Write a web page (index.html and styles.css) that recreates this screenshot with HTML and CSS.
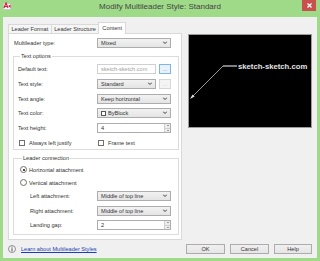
FILE: index.html
```html
<!DOCTYPE html>
<html lang="en">
<head>
    <meta charset="UTF-8">
    <meta name="viewport" content="width=device-width, initial-scale=1.0">
    <title>Modify Multileader Style: Standard</title>
    <link rel="stylesheet" href="styles.css">
</head>
<body>
    <div class="window">
        <div class="titlebar">
            <div class="app-icon">
                <svg width="8" height="8" viewBox="0 0 8 8">
                    <rect x="0.5" y="1.5" width="7" height="6" fill="#fff" stroke="#c9c9c9"/>
                    <path d="M1 6 L3 1 L5 6 M2 4.5 H4" fill="none" stroke="#d0263a" stroke-width="1.2"/>
                    <path d="M5 4 L7.5 2.5 V6 Z" fill="#d0263a"/>
                </svg>
            </div>
            <div class="title">Modify Multileader Style: Standard</div>
            <div class="title-right">
                <button class="close">
                    <svg width="5" height="5" viewBox="0 0 5 5"><path d="M0.5 0.5 L4.5 4.5 M4.5 0.5 L0.5 4.5" stroke="#fff" stroke-width="1.3"/></svg>
                </button>
            </div>
        </div>

        <div class="dialog">
            <div class="tabs">
                <div class="tab">Leader Format</div>
                <div class="tab">Leader Structure</div>
                <div class="tab active">Content</div>
            </div>

            <div class="main">
                <div class="panel">
                    <div class="row top-row">
                        <span class="label">Multileader type:</span>
                        <div class="combo"><span>Mixed</span><i class="chev"></i></div>
                    </div>

                    <fieldset class="group text-options">
                        <legend>Text options</legend>
                        <div class="grid">
                            <span class="label">Default text:</span>
                            <div class="pair">
                                <div class="field disabled">sketch-sketch.com</div>
                                <button class="dots focus">...</button>
                            </div>

                            <span class="label">Text style:</span>
                            <div class="pair">
                                <div class="combo"><span>Standard</span><i class="chev"></i></div>
                                <button class="dots off">...</button>
                            </div>

                            <span class="label">Text angle:</span>
                            <div class="combo"><span>Keep horizontal</span><i class="chev"></i></div>

                            <span class="label">Text color:</span>
                            <div class="combo"><span><b class="swatch"></b>ByBlock</span><i class="chev"></i></div>

                            <span class="label">Text height:</span>
                            <div class="field spin">4
                                <span class="spinner"><i class="up"></i><i class="down"></i></span>
                            </div>
                        </div>
                        <div class="checks">
                            <label class="check"><b class="box"></b>Always left justify</label>
                            <label class="check"><b class="box"></b>Frame text</label>
                        </div>
                    </fieldset>

                    <fieldset class="group leader-conn">
                        <legend>Leader connection</legend>
                        <label class="radio"><b class="dot on"></b>Horizontal attachment</label>
                        <label class="radio"><b class="dot"></b>Vertical attachment</label>
                        <div class="grid sub">
                            <span class="label">Left attachment:</span>
                            <div class="combo"><span>Middle of top line</span><i class="chev"></i></div>

                            <span class="label">Right attachment:</span>
                            <div class="combo"><span>Middle of top line</span><i class="chev"></i></div>

                            <span class="label">Landing gap:</span>
                            <div class="field spin">2
                                <span class="spinner"><i class="up"></i><i class="down"></i></span>
                            </div>
                        </div>
                    </fieldset>
                </div>

                <div class="side">
                    <div class="preview">
                        <svg width="122" height="92" viewBox="0 0 122 92">
                            <line x1="34" y1="31" x2="2" y2="63" stroke="#a8a8a8" stroke-width="0.9"/>
                            <line x1="34" y1="31" x2="48" y2="31" stroke="#b5b5b5" stroke-width="1.4"/>
                            <polygon points="1,64 5.6,61.5 3.5,59.4" fill="#e0e0e0"/>
                            <text x="49" y="34" class="preview-text">sketch-sketch.com</text>
                        </svg>
                    </div>
                </div>
            </div>

            <div class="footer">
                <svg class="info" width="8" height="8" viewBox="0 0 8 8">
                    <circle cx="4" cy="4" r="3.5" fill="#f4f4f4" stroke="#7a7a7a" stroke-width="0.8"/>
                    <rect x="3.5" y="1.6" width="1" height="1" fill="#555"/>
                    <rect x="3.5" y="3.2" width="1" height="3.2" fill="#555"/>
                </svg>
                <a class="learn" href="#">Learn about Multileader Styles</a>
                <div class="buttons">
                    <button class="btn">OK</button>
                    <button class="btn">Cancel</button>
                    <button class="btn">Help</button>
                </div>
            </div>
        </div>
    </div>
</body>
</html>
```

FILE: styles.css
```css
* {
    box-sizing: border-box;
}

body {
    margin: 0;
    width: 320px;
    height: 261px;
    overflow: hidden;
    background: #9fda88;
    font-family: "Liberation Sans", Arial, sans-serif;
    font-size: 5.6px;
    color: #333;
}

.window {
    display: flex;
    flex-direction: column;
    height: 261px;
}

/* barra de titulo */
.titlebar {
    height: 17px;
    display: grid;
    grid-template-columns: 1fr auto 1fr;
    align-items: start;
}

.app-icon {
    padding: 2px 0 0 3px;
    line-height: 0;
}

.title {
    font-size: 8px;
    line-height: 14px;
    color: #444;
}

.title-right {
    display: flex;
    justify-content: flex-end;
    padding-right: 4px;
}

.close {
    width: 14px;
    height: 11px;
    border: none;
    padding: 0;
    background: #c9504c;
    display: flex;
    align-items: center;
    justify-content: center;
}

/* corpo do dialogo */
.dialog {
    flex: 1;
    margin: 0 3px 3px;
    background: #f0f0f0;
    padding: 5px 5px 0;
    display: flex;
    flex-direction: column;
}

.tabs {
    display: flex;
    align-items: flex-end;
    height: 11px;
}

.tab {
    height: 9px;
    line-height: 8px;
    padding: 0 2.5px;
    border: 1px solid #d9d9d9;
    border-bottom: none;
    background: #f5f5f5;
    margin-right: -1px;
    white-space: nowrap;
}

.tab.active {
    height: 12px;
    line-height: 10px;
    margin-bottom: -1px;
    padding: 0 3px;
    background: #fff;
    position: relative;
    z-index: 1;
}

.main {
    display: flex;
    gap: 6px;
    height: 207px;
}

.panel {
    width: 174px;
    background: #fff;
    border: 1px solid #d9d9d9;
    padding: 4px 2px 0 4px;
}

.label {
    white-space: nowrap;
    line-height: 10px;
}

.row.top-row {
    display: grid;
    grid-template-columns: 84px 74px;
    height: 10px;
}

.top-row .label {
    padding-left: 1px;
}

/* caixas de grupo */
.group {
    margin: 4px 0 0;
    padding: 0;
    border: 1px solid #dcdcdc;
    min-width: 0;
}

.group legend {
    margin-left: 2px;
    padding: 0 1px;
    line-height: 8px;
}

.grid {
    display: grid;
    grid-template-columns: 79px 74px;
    grid-auto-rows: 10px;
    align-items: center;
}

.text-options {
    padding: 4px 0 3px 4px;
}

.text-options .grid {
    row-gap: 4.75px;
}

.pair {
    display: flex;
    gap: 3px;
    height: 10px;
}

.pair > :first-child {
    flex: 1;
}

.combo {
    height: 10px;
    display: flex;
    align-items: center;
    justify-content: space-between;
    padding: 0 2px 0 3px;
    border: 1px solid #adadad;
    background: linear-gradient(#f2f2f2, #e4e4e4);
    white-space: nowrap;
}

.combo span {
    display: flex;
    align-items: center;
}

.chev {
    width: 4px;
    height: 4px;
    border-right: 1px solid #555;
    border-bottom: 1px solid #555;
    transform: scale(0.8, 0.6) rotate(45deg);
    margin: 0 1px 2px 0;
}

.swatch {
    width: 5px;
    height: 5px;
    border: 1px solid #555;
    background: #fff;
    margin-right: 2px;
}

.field {
    height: 10px;
    line-height: 8px;
    padding: 0 3px;
    border: 1px solid #abadb3;
    background: #fff;
    white-space: nowrap;
}

.field.disabled {
    color: #a0a0a0;
    border-color: #d0d0d0;
}

.field.spin {
    display: flex;
    justify-content: space-between;
    padding-right: 0;
}

.spinner {
    width: 6px;
    display: flex;
    flex-direction: column;
    border-left: 1px solid #d0d0d0;
}

.spinner i {
    flex: 1;
    background: #ececec;
    position: relative;
}

.spinner i.up {
    border-bottom: 1px solid #d0d0d0;
}

.spinner i::after {
    content: "";
    position: absolute;
    left: 1.5px;
    top: 1px;
    border-left: 1.3px solid transparent;
    border-right: 1.3px solid transparent;
}

.spinner i.up::after {
    border-bottom: 1.5px solid #555;
}

.spinner i.down::after {
    border-top: 1.5px solid #555;
}

.dots {
    width: 12px;
    height: 10px;
    padding: 0;
    font-family: inherit;
    font-size: 5px;
    line-height: 6px;
    color: #777;
    border: 1px solid #acacac;
    background: #ececec;
}

.dots.focus {
    border-color: #7eb4ea;
    background: #e8f2fc;
}

.dots.off {
    color: #bbb;
    border-color: #d5d5d5;
    background: #f4f4f4;
}

.checks {
    display: grid;
    grid-template-columns: 79px 74px;
    margin-top: 7px;
    height: 6px;
}

.check,
.radio {
    display: flex;
    align-items: center;
    white-space: nowrap;
}

.check {
    padding-left: 1px;
    line-height: 6px;
}

.box {
    width: 6px;
    height: 6px;
    border: 1px solid #707070;
    background: #fff;
    margin-right: 4px;
}

/* grupo de conexao */
.leader-conn {
    padding: 3px 0 4px 6px;
}

.radio {
    height: 9px;
    margin-bottom: 4px;
}

.dot {
    width: 7px;
    height: 7px;
    border: 1px solid #707070;
    border-radius: 50%;
    background: #fff;
    margin-right: 2px;
    position: relative;
}

.dot.on::after {
    content: "";
    position: absolute;
    left: 1.5px;
    top: 1.5px;
    width: 2px;
    height: 2px;
    border-radius: 50%;
    background: #111;
}

.grid.sub {
    grid-template-columns: 67px 74px;
    row-gap: 4.5px;
    padding-left: 10px;
}

/* lado direito */
.side {
    flex: 1;
}

.preview {
    width: 124px;
    height: 94px;
    margin-top: 1px;
    background: #000;
    border: 1px solid #9c9c9c;
    line-height: 0;
}

.preview-text {
    fill: #e4e4e4;
    font-family: "Liberation Sans", Arial, sans-serif;
    font-size: 7.7px;
    font-weight: bold;
}

/* rodape */
.footer {
    height: 18px;
    display: flex;
    align-items: center;
}

.info {
    flex: none;
}

.learn {
    margin-left: 5px;
    color: #1a3fb5;
    text-decoration: underline;
}

.buttons {
    margin-left: auto;
    display: flex;
    gap: 5px;
}

.btn {
    width: 39px;
    height: 10px;
    padding: 0;
    font-family: inherit;
    font-size: 5.6px;
    color: #333;
    border: 1px solid #acacac;
    background: linear-gradient(#f0f0f0, #e5e5e5);
}

.btn:last-child {
    width: 38px;
}
```
